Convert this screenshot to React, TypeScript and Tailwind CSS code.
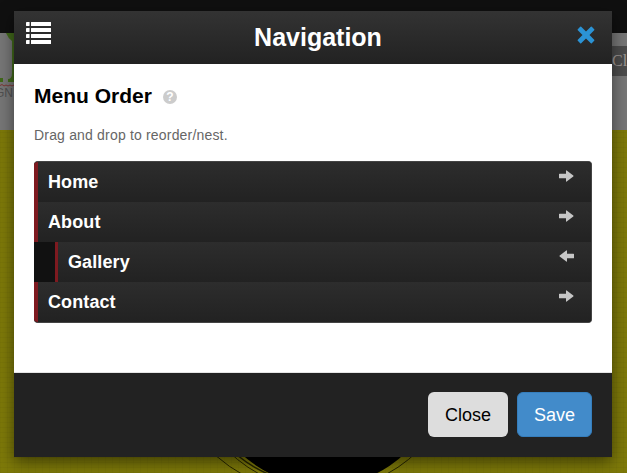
const items = [
  { label: 'Home', nested: false },
  { label: 'About', nested: false },
  { label: 'Gallery', nested: true },
  { label: 'Contact', nested: false },
];

function ListIcon() {
  return (
    <svg width="25" height="23" viewBox="0 0 25 23" fill="#fff">
      {[0, 6, 12, 18].map((y) => (
        <g key={y}>
          <rect x="0" y={y} width="3.6" height="4" rx=".4" />
          <rect x="5" y={y} width="20" height="4" rx=".3" />
        </g>
      ))}
    </svg>
  );
}

function CloseIcon() {
  return (
    <svg width="18" height="18" viewBox="0 0 18 18" fill="#2b93d5">
      <path d="M4.2 .8 9 5.5 13.8 .8Q14.3 .3 14.8 .8L17.2 3.2Q17.7 3.7 17.2 4.2L12.5 9 17.2 13.8Q17.7 14.3 17.2 14.8L14.8 17.2Q14.3 17.7 13.8 17.2L9 12.5 4.2 17.2Q3.7 17.7 3.2 17.2L.8 14.8Q.3 14.3 .8 13.8L5.5 9 .8 4.2Q.3 3.7 .8 3.2L3.2 .8Q3.7 .3 4.2 .8Z" />
    </svg>
  );
}

function Arrow({ left }: { left: boolean }) {
  return (
    <svg width="15" height="12" viewBox="0 0 15 12" fill="#c6c6c6" className={left ? 'rotate-180' : ''}>
      <path d="M.5 3.8H7V.8Q7 0 7.7 .5L14.3 5.6Q14.8 6 14.3 6.4L7.7 11.5Q7 12 7 11.2V8.2H.5Q0 8.2 0 7.7V4.3Q0 3.8 .5 3.8Z" />
    </svg>
  );
}

function Backdrop() {
  return (
    <div className="flex h-full flex-col">
      <div className="h-[33px] bg-[#101010]" />
      <div className="flex h-[97px] justify-between bg-[#777]">
        <svg width="14" height="97" viewBox="0 0 14 97">
          <path d="M6 0H14V49H8V46Q12 46 12 40V8Q8 5 6 0Z" fill="#41691a" />
          <path d="M0 45H3V49H0Z" fill="#41691a" />
          <path d="M0 52.5 2 51.5 4 53 6 52 8 53 10 52 12 53 14 52" stroke="#7d3535" fill="none" />
          <text x="-5" y="64" fontSize="12" fill="#505050" fontFamily="Liberation Sans, sans-serif">GN</text>
        </svg>
        <div className="mt-[13px] h-[30px] w-[15px] overflow-hidden bg-[#4c4c4c] pt-1 font-['Liberation_Serif',serif] text-[16px] leading-[22px] text-[#a09a98]">Cl</div>
      </div>
      <div className="flex-1 bg-[#7e7a09] bg-[repeating-linear-gradient(0deg,#00000009_0px,#00000009_1px,transparent_1px,transparent_5px),repeating-linear-gradient(90deg,#00000007_0px,#00000007_1px,transparent_1px,transparent_7px)]">
        <svg width="627" height="343" viewBox="0 130 627 343">
          <g fill="none" stroke="#262500">
            <path d="M215 455A170 170 0 0 0 245 476" />
            <circle cx="323" cy="355" r="135" />
            <path d="M237 455A130 130 0 0 0 268 474" strokeWidth="1.5" />
          </g>
          <circle cx="323" cy="366" r="120" fill="#000" />
        </svg>
      </div>
    </div>
  );
}

export default function App() {
  return (
    <div className="relative h-[473px] w-[627px] overflow-hidden font-['Liberation_Sans',Arial,sans-serif]">
      <Backdrop />
      <div className="absolute top-[11px] left-[14px] flex h-[446px] w-[598px] flex-col bg-white shadow-[0_5px_15px_rgba(0,0,0,0.5)]">
        <header className="flex h-[53px] items-start justify-between bg-linear-to-b from-[#333] to-[#222] px-3">
          <div className="w-[25px] pt-[11px]"><ListIcon /></div>
          <h1 className="pt-[8px] pl-[8px] text-[25px] leading-[36px] font-bold text-white">Navigation</h1>
          <button className="mr-[5px] pt-[15px]"><CloseIcon /></button>
        </header>
        <main className="flex-1 border-b border-[#e5e5e5] px-5 pt-[20px]">
          <div className="flex items-center gap-[11px]">
            <h2 className="text-[21px] leading-[24px] font-bold text-black">Menu Order</h2>
            <span className="mt-[1px] flex size-[14px] items-center justify-center rounded-full bg-[#ccc] text-[12px] leading-none font-bold text-white">?</span>
          </div>
          <p className="mt-[17px] text-[14px] leading-[20px] tracking-[0.18px] text-[#666]">Drag and drop to reorder/nest.</p>
          <ul className="mt-[16px] h-[162px] overflow-hidden rounded border-y border-r border-[#444] bg-[#111]">
            {items.map(({ label, nested }) => (
              <li
                key={label}
                className={`flex h-10 items-start justify-between border-[#7e1a20] bg-linear-to-b from-[#2d2d2d] to-[#222] pr-[17px] pl-[10px] ${nested ? 'ml-[21px] border-l-3' : 'border-l-4'}`}
              >
                <span className="pt-[7px] text-[18px] leading-[26px] font-bold tracking-[0.1px] text-white">{label}</span>
                <span className="pt-[8px]"><Arrow left={nested} /></span>
              </li>
            ))}
          </ul>
        </main>
        <footer className="flex h-[84px] items-start justify-end gap-[9px] bg-[#222] pt-[19px] pr-5">
          <button className="h-[45px] w-20 rounded-md bg-[#ddd] pt-[2px] text-[18px] text-black">Close</button>
          <button className="h-[45px] w-[75px] rounded-md border border-[#357ebd] bg-[#428bca] pt-[2px] text-[18px] text-white">Save</button>
        </footer>
      </div>
    </div>
  );
}
